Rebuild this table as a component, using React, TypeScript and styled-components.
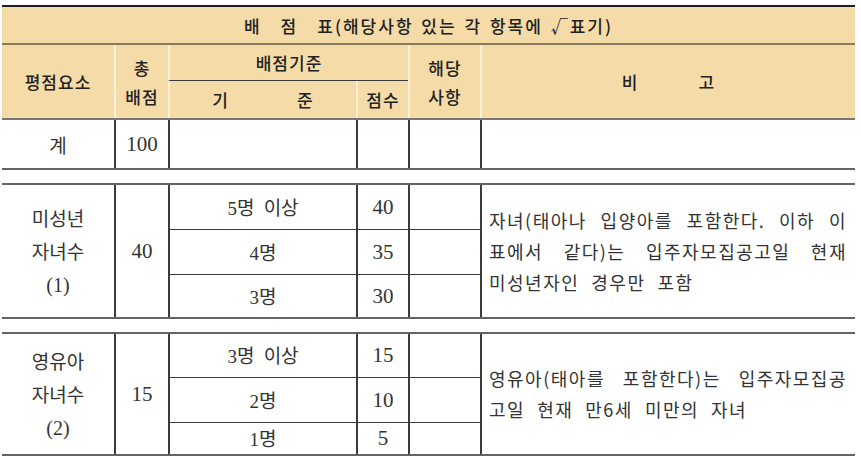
import React from "react";
import styled, { createGlobalStyle } from "styled-components";

const Global = createGlobalStyle`
  html, body { margin: 0; padding: 0; background: #ffffff; }
  body { font-family: "Noto Sans CJK KR", "Noto Sans", sans-serif; color: #333; }
`;

const COLS = "112px 54px 188px 52px 72px 1fr";

const Page = styled.div`
  padding: 5px 0 0 2px;
  width: 853px;
`;

const Board = styled.div`
  border-top: 2px solid #1f1f1f;
`;

const Head = styled.div`
  background: #f5dba8;
  border-bottom: 2px solid #767676;
  color: #222;
  font-size: 17px;
  font-weight: 500;
  letter-spacing: 1px;
`;

const Title = styled.div`
  height: 36px;
  display: flex;
  align-items: center;
  justify-content: center;
  border-bottom: 2px solid #8b7b5e;
  white-space: pre;
  letter-spacing: 2px;
  word-spacing: 2px;
`;

const HeadGrid = styled.div`
  display: grid;
  grid-template-columns: ${COLS};
  grid-template-rows: 36px 37px;
`;

const HCell = styled.div<{ $left?: boolean; $rows?: number; $span?: number; $rule?: boolean; $gap?: number }>`
  grid-row: span ${(p) => p.$rows ?? 1};
  grid-column: span ${(p) => p.$span ?? 1};
  border-left: ${(p) => (p.$left ? "2px solid #fcf0da" : "none")};
  border-bottom: ${(p) => (p.$rule ? "1px solid #3a3a3a" : "none")};
  display: flex;
  flex-direction: ${(p) => (p.$gap ? "row" : "column")};
  gap: ${(p) => (p.$gap ? `${p.$gap}px` : "0")};
  align-items: center;
  justify-content: center;
  line-height: 29px;
`;

const Block = styled.div<{ $rows: string; $top?: boolean }>`
  display: grid;
  grid-template-columns: ${COLS};
  grid-template-rows: ${(p) => p.$rows};
  border-top: ${(p) => (p.$top ? "2px solid #646464" : "none")};
  margin-top: ${(p) => (p.$top ? "13px" : "0")};
  border-bottom: 2px solid #646464;
`;

const Cell = styled.div<{ $left?: boolean; $rows?: number; $rule?: boolean }>`
  grid-row: span ${(p) => p.$rows ?? 1};
  border-left: ${(p) => (p.$left ? "2px solid #3b3b3b" : "none")};
  border-bottom: ${(p) => (p.$rule ? "1px solid #3b3b3b" : "none")};
  display: flex;
  flex-direction: column;
  align-items: center;
  justify-content: center;
  font-size: 19px;
  line-height: 33px;
  color: #333;
  word-spacing: 5px;
`;

const Num = styled.span`
  font-family: "Liberation Serif", "Noto Sans CJK KR", serif;
  font-size: 21px;
`;

const Note = styled.div<{ $rows: number }>`
  grid-row: span ${(p) => p.$rows};
  border-left: 2px solid #3b3b3b;
  display: flex;
  flex-direction: column;
  justify-content: center;
  padding: 0 8px 0 7px;
  font-size: 18px;
  letter-spacing: 1.5px;
  line-height: 31px;
  color: #333;
`;

const NoteLine = styled.div<{ $fill?: boolean }>`
  display: flex;
  justify-content: ${(p) => (p.$fill ? "space-between" : "flex-start")};
  gap: 12px;
  white-space: nowrap;
`;

type Tier = { label: React.ReactNode; score: string };

const Section = ({
  name,
  total,
  tiers,
  rows,
  note,
}: {
  name: React.ReactNode[];
  total: string;
  tiers: Tier[];
  rows: string;
  note: string[];
}) => (
  <Block $rows={rows} $top>
    <Cell $rows={tiers.length}>
      {name.map((n, i) => (
        <span key={i}>{n}</span>
      ))}
    </Cell>
    <Cell $left $rows={tiers.length}>
      <Num>{total}</Num>
    </Cell>
    {tiers.map((t, i) => {
      const rule = i < tiers.length - 1;
      return (
        <React.Fragment key={i}>
          <Cell $left $rule={rule} style={{ gridColumn: 3, gridRow: i + 1 }}>
            <span>{t.label}</span>
          </Cell>
          <Cell $left $rule={rule} style={{ gridColumn: 4, gridRow: i + 1 }}>
            <Num>{t.score}</Num>
          </Cell>
          <Cell $left $rule={rule} style={{ gridColumn: 5, gridRow: i + 1 }} />
        </React.Fragment>
      );
    })}
    <Note $rows={tiers.length} style={{ gridColumn: 6, gridRow: `1 / span ${tiers.length}` }}>
      {note.map((l, i) => (
        <NoteLine key={i} $fill={i < note.length - 1}>
          {l.split(" ").map((w, j) => (
            <span key={j}>{w}</span>
          ))}
        </NoteLine>
      ))}
    </Note>
  </Block>
);

const Lbl = ({ n, t }: { n: string; t: string }) => (
  <>
    <Num style={{ fontSize: 19 }}>{n}</Num>
    {t}
  </>
);

export default function App() {
  return (
    <>
      <Global />
      <Page>
        <Board>
          <Head>
            <Title>{"배\u2003점\u2003표(해당사항 있는 각 항목에 √표기)"}</Title>
            <HeadGrid>
              <HCell $rows={2}>평점요소</HCell>
              <HCell $rows={2} $left>
                <span>총</span>
                <span>배점</span>
              </HCell>
              <HCell $span={2} $left $rule>
                배점기준
              </HCell>
              <HCell $rows={2} $left>
                <span>해당</span>
                <span>사항</span>
              </HCell>
              <HCell $rows={2} $left $gap={60}>
                <span>비</span>
                <span>고</span>
              </HCell>
              <HCell $left $gap={68}>
                <span>기</span>
                <span>준</span>
              </HCell>
              <HCell $left>점수</HCell>
            </HeadGrid>
          </Head>
          <Block $rows="48px">
            <Cell>계</Cell>
            <Cell $left>
              <Num>100</Num>
            </Cell>
            <Cell $left />
            <Cell $left />
            <Cell $left />
            <Cell $left />
          </Block>
          <Section
            name={["미성년", "자녀수", <Num key="a" style={{ fontSize: 20 }}>(1)</Num>]}
            total="40"
            rows="45px 45px 42px"
            tiers={[
              { label: <><Lbl n="5" t="명" /> 이상</>, score: "40" },
              { label: <Lbl n="4" t="명" />, score: "35" },
              { label: <Lbl n="3" t="명" />, score: "30" },
            ]}
            note={[
              "자녀(태아나 입양아를 포함한다. 이하 이",
              "표에서 같다)는 입주자모집공고일 현재",
              "미성년자인 경우만 포함",
            ]}
          />
          <Section
            name={["영유아", "자녀수", <Num key="b" style={{ fontSize: 20 }}>(2)</Num>]}
            total="15"
            rows="44px 45px 31px"
            tiers={[
              { label: <><Lbl n="3" t="명" /> 이상</>, score: "15" },
              { label: <Lbl n="2" t="명" />, score: "10" },
              { label: <Lbl n="1" t="명" />, score: "5" },
            ]}
            note={["영유아(태아를 포함한다)는 입주자모집공", "고일 현재 만6세 미만의 자녀"]}
          />
        </Board>
      </Page>
    </>
  );
}
